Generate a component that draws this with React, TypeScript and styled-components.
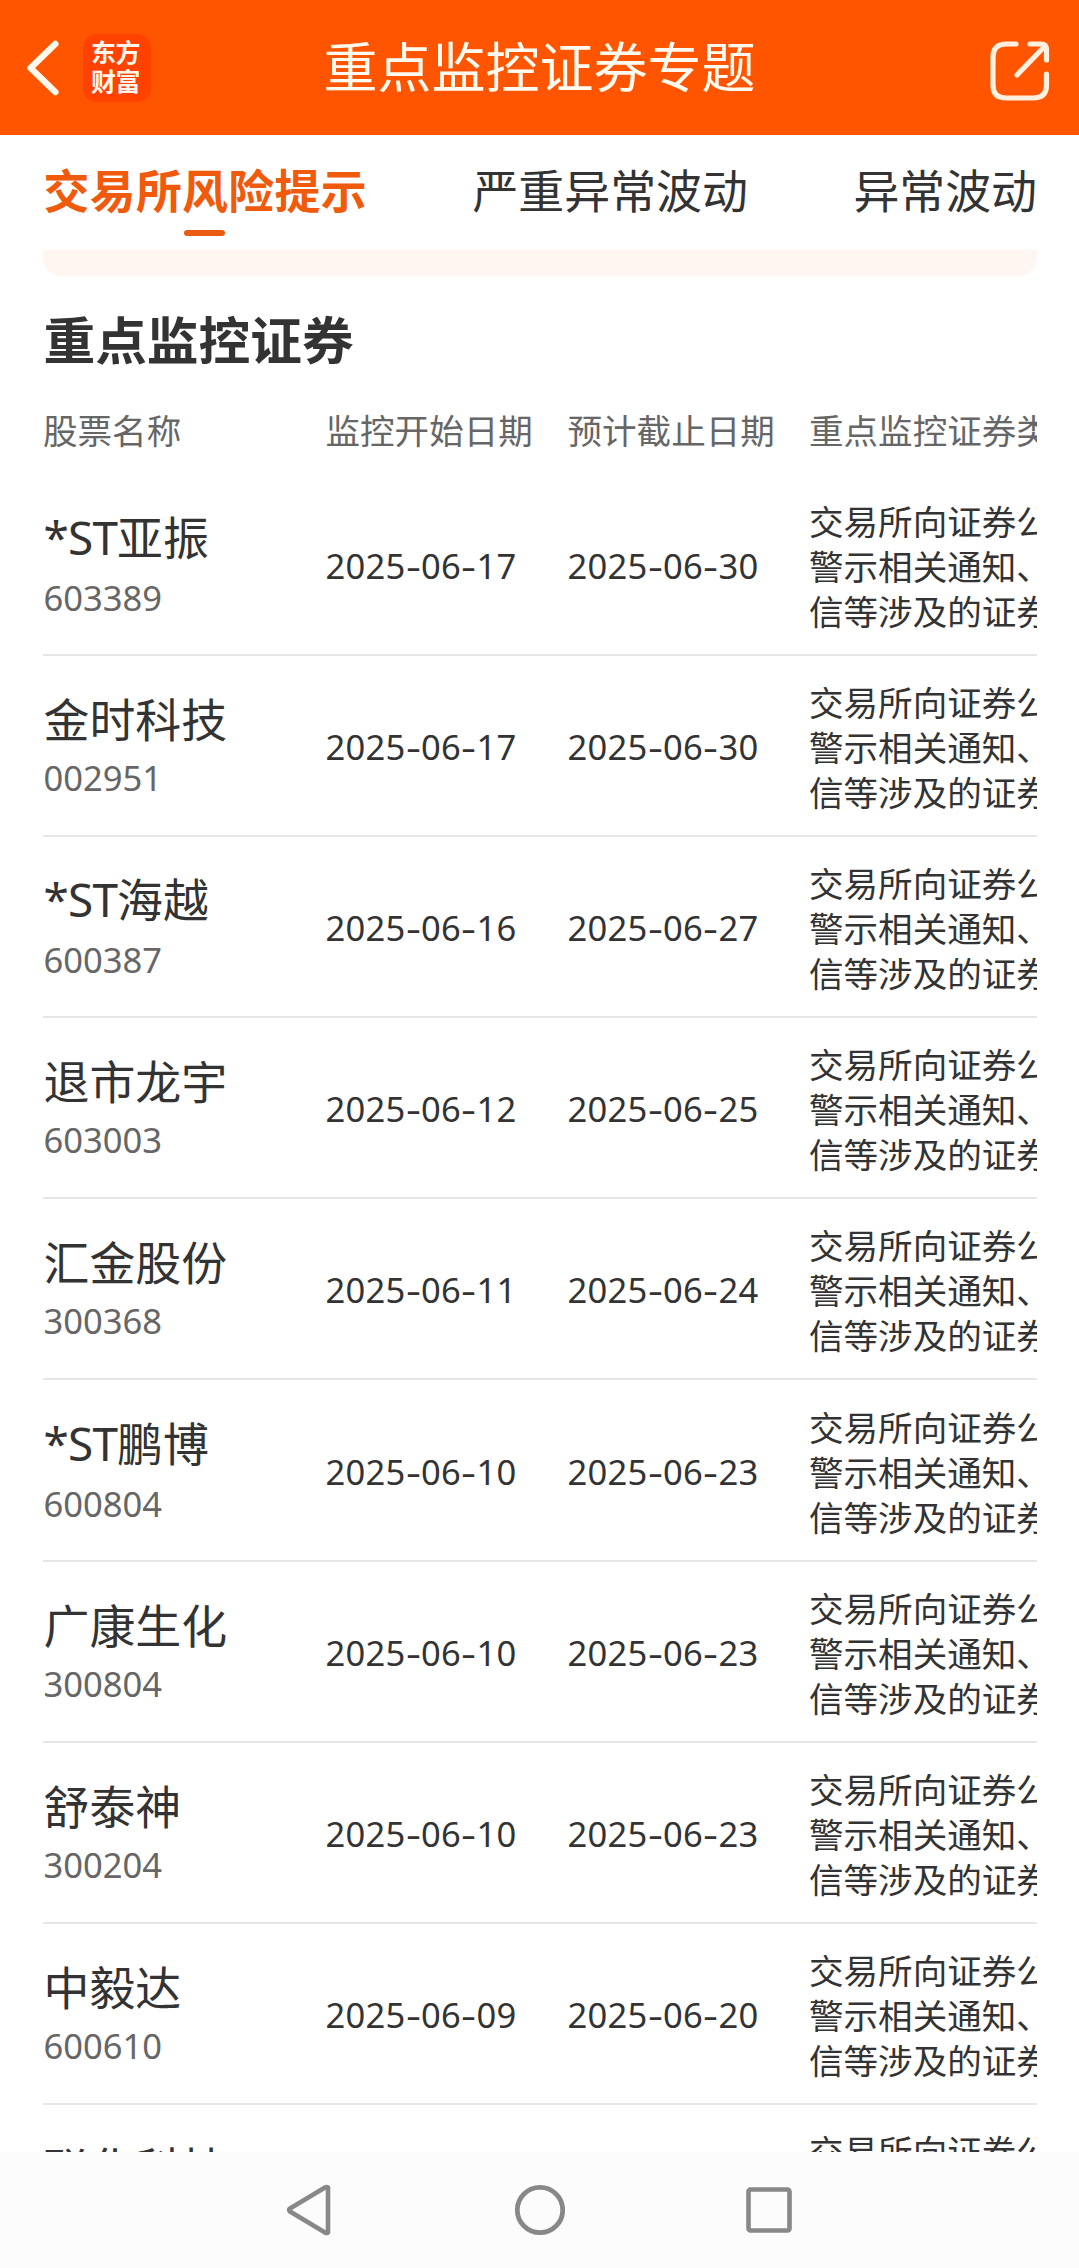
import React from "react";
import styled, { createGlobalStyle } from "styled-components";

const GlobalStyle = createGlobalStyle`
  * { box-sizing: border-box; }
  body { margin: 0; background: #fff; }
`;

const Page = styled.div`
  display: flex;
  flex-direction: column;
  width: 1079px;
  height: 2268px;
  overflow: hidden;
  background: #fff;
  color: #333;
  font-family: "Noto Sans CJK SC", "Noto Sans", sans-serif;
`;

const Header = styled.header`
  flex: none;
  display: grid;
  grid-template-columns: 170px 1fr 170px;
  align-items: center;
  height: 135px;
  background: #ff5500;
`;

const HeaderLeft = styled.div`
  display: flex;
  align-items: center;
  gap: 23px;
  padding-left: 26px;
`;

const HeaderRight = styled.div`
  display: flex;
  justify-content: flex-end;
  padding: 7px 28px 0 0;
`;

const Icon = styled.svg`
  display: block;
  flex: none;
  fill: none;
  stroke-linecap: round;
  stroke-linejoin: round;
`;

const Logo = styled.div`
  display: flex;
  flex-direction: column;
  align-items: center;
  justify-content: center;
  width: 68px;
  height: 68px;
  padding: 0 3px 4px 0;
  border-radius: 14px;
  background: #ff4200;
  color: #fff5ea;
  font-size: 25px;
  font-weight: 700;
  line-height: 29px;
  letter-spacing: -0.5px;
`;

const Title = styled.h1`
  margin: 0;
  padding-bottom: 6px;
  color: #fffaf0;
  font-size: 54px;
  font-weight: 400;
  line-height: 76px;
  text-align: center;
  white-space: nowrap;
`;

const Tabs = styled.nav`
  flex: none;
  display: flex;
  justify-content: space-between;
  height: 115px;
  padding: 20px 42px 0 43.5px;
`;

const Tab = styled.div<{ $active?: boolean }>`
  display: flex;
  flex-direction: column;
  align-items: center;
  gap: 9px;
  color: ${(p) => (p.$active ? "#f05a0c" : "#333")};
  font-size: 45.9px;
  font-weight: ${(p) => (p.$active ? 700 : 400)};
  letter-spacing: ${(p) => (p.$active ? "0.3px" : "0")};
  line-height: 66px;
  white-space: nowrap;
`;

const TabMark = styled.span`
  width: 41px;
  height: 6px;
  margin-right: 2px;
  border-radius: 3px;
  background: #ea5b14;
`;

const Content = styled.main`
  flex: 1;
  min-height: 0;
  margin: 0 42px 0 43px;
  overflow: hidden;
`;

const NoticeEnd = styled.div`
  height: 26px;
  border-radius: 0 0 18px 18px;
  background: #fff5f1;
`;

const SectionTitle = styled.h2`
  margin: 25px 0 0 0.5px;
  font-size: 51.7px;
  font-weight: 700;
  line-height: 74px;
`;

const columns = `
  display: grid;
  grid-template-columns: 282.5px 242px 241.5px 660px;
  width: 1426px;
`;

const TableHead = styled.div`
  ${columns}
  height: 100px;
  padding-top: 29px;
  color: #666;
  font-size: 34.56px;
  line-height: 50px;
`;

const Row = styled.div`
  ${columns}
  align-items: center;
  height: 181.1px;
  padding-top: 2px;
  border-bottom: 2px solid #e6e6e6;
`;

const NameCell = styled.div`
  padding: 0 0 4px 0.5px;
`;

const Name = styled.div`
  margin-bottom: 3px;
  font-size: 45.9px;
  line-height: 64px;
  white-space: nowrap;
`;

const Latin = styled.span`
  font-family: "Noto Sans", sans-serif;
  letter-spacing: -0.8px;
`;

const Code = styled.div`
  color: #666;
  font-family: "Noto Sans", sans-serif;
  font-size: 34.56px;
  line-height: 52px;
`;

const DateCell = styled.div`
  font-family: "Noto Sans", sans-serif;
  font-size: 34.56px;
  line-height: 45px;
  letter-spacing: 0.25px;
  white-space: nowrap;
`;

const Dash = styled.span`
  display: inline-block;
  width: 15.5px;
  text-align: center;
  transform: scaleX(1.35);
`;

const Reason = styled.div`
  font-size: 34.56px;
  line-height: 45px;
  white-space: nowrap;
`;

const SystemBar = styled.footer`
  flex: none;
  display: flex;
  align-items: center;
  justify-content: center;
  gap: 179px;
  height: 116px;
  padding-right: 2px;
  background: #fcfcfc;
`;

type Stock = { prefix?: string; name: string; code: string; start: string; end: string };

const stocks: Stock[] = [
  { prefix: "*ST", name: "亚振", code: "603389", start: "2025-06-17", end: "2025-06-30" },
  { name: "金时科技", code: "002951", start: "2025-06-17", end: "2025-06-30" },
  { prefix: "*ST", name: "海越", code: "600387", start: "2025-06-16", end: "2025-06-27" },
  { name: "退市龙宇", code: "603003", start: "2025-06-12", end: "2025-06-25" },
  { name: "汇金股份", code: "300368", start: "2025-06-11", end: "2025-06-24" },
  { prefix: "*ST", name: "鹏博", code: "600804", start: "2025-06-10", end: "2025-06-23" },
  { name: "广康生化", code: "300804", start: "2025-06-10", end: "2025-06-23" },
  { name: "舒泰神", code: "300204", start: "2025-06-10", end: "2025-06-23" },
  { name: "中毅达", code: "600610", start: "2025-06-09", end: "2025-06-20" },
  { name: "联化科技", code: "", start: "", end: "" },
];

const reason = ["交易所向证券公", "警示相关通知、", "信等涉及的证券"];

function DateText({ value }: { value: string }) {
  return (
    <DateCell>
      {value.split("-").map((part, i) => (
        <React.Fragment key={i}>
          {i > 0 && <Dash>-</Dash>}
          {part}
        </React.Fragment>
      ))}
    </DateCell>
  );
}

function StockRow({ stock }: { stock: Stock }) {
  return (
    <Row>
      <NameCell>
        <Name>
          {stock.prefix && <Latin>{stock.prefix}</Latin>}
          {stock.name}
        </Name>
        <Code>{stock.code || "\u00a0"}</Code>
      </NameCell>
      <DateText value={stock.start} />
      <DateText value={stock.end} />
      <Reason>
        {reason.map((line) => (
          <div key={line}>{line}</div>
        ))}
      </Reason>
    </Row>
  );
}

export default function App() {
  return (
    <Page>
      <GlobalStyle />
      <Header>
        <HeaderLeft>
          <Icon width="34" height="56" viewBox="0 0 34 56" stroke="#fff8ec" strokeWidth="6.5">
            <path d="M29.3 4 L4.5 28 L29.3 52" />
          </Icon>
          <Logo>
            <span>东方</span>
            <span>财富</span>
          </Logo>
        </HeaderLeft>
        <Title>重点监控证券专题</Title>
        <HeaderRight>
          <Icon width="62" height="62" viewBox="0 0 62 62" stroke="#fff0e0" strokeWidth="5.2">
            <path d="M27 4 H17 Q4 4 4 17 V45 Q4 58 17 58 H44 Q57.500 58 57.500 45 V34" />
            <path d="M41 4 H52 Q57.500 4 57.500 9.500 V20" />
            <path d="M28 35 L56 6" />
          </Icon>
        </HeaderRight>
      </Header>
      <Tabs>
        <Tab $active>
          交易所风险提示
          <TabMark />
        </Tab>
        <Tab>严重异常波动</Tab>
        <Tab>异常波动</Tab>
      </Tabs>
      <Content>
        <NoticeEnd />
        <SectionTitle>重点监控证券</SectionTitle>
        <TableHead>
          <span>股票名称</span>
          <span>监控开始日期</span>
          <span>预计截止日期</span>
          <span>重点监控证券类</span>
        </TableHead>
        {stocks.map((s) => (
          <StockRow key={s.name} stock={s} />
        ))}
      </Content>
      <SystemBar>
        <Icon width="50" height="52" viewBox="0 0 50 52" stroke="#888" strokeWidth="4.6">
          <path d="M44 3.500 V48.500 Q42.500 49.500 41 48.500 L6 27.500 Q4.500 26 6 24.500 L41 3.500 Q42.500 2.500 44 3.500 Z" />
        </Icon>
        <Icon width="52" height="52" viewBox="0 0 52 52" stroke="#888" strokeWidth="4.8">
          <circle cx="27" cy="26" r="22.700" />
        </Icon>
        <Icon width="50" height="52" viewBox="0 0 50 52" stroke="#888" strokeWidth="4.6">
          <rect x="4.500" y="5.500" width="41" height="41" rx="2" />
        </Icon>
      </SystemBar>
    </Page>
  );
}
